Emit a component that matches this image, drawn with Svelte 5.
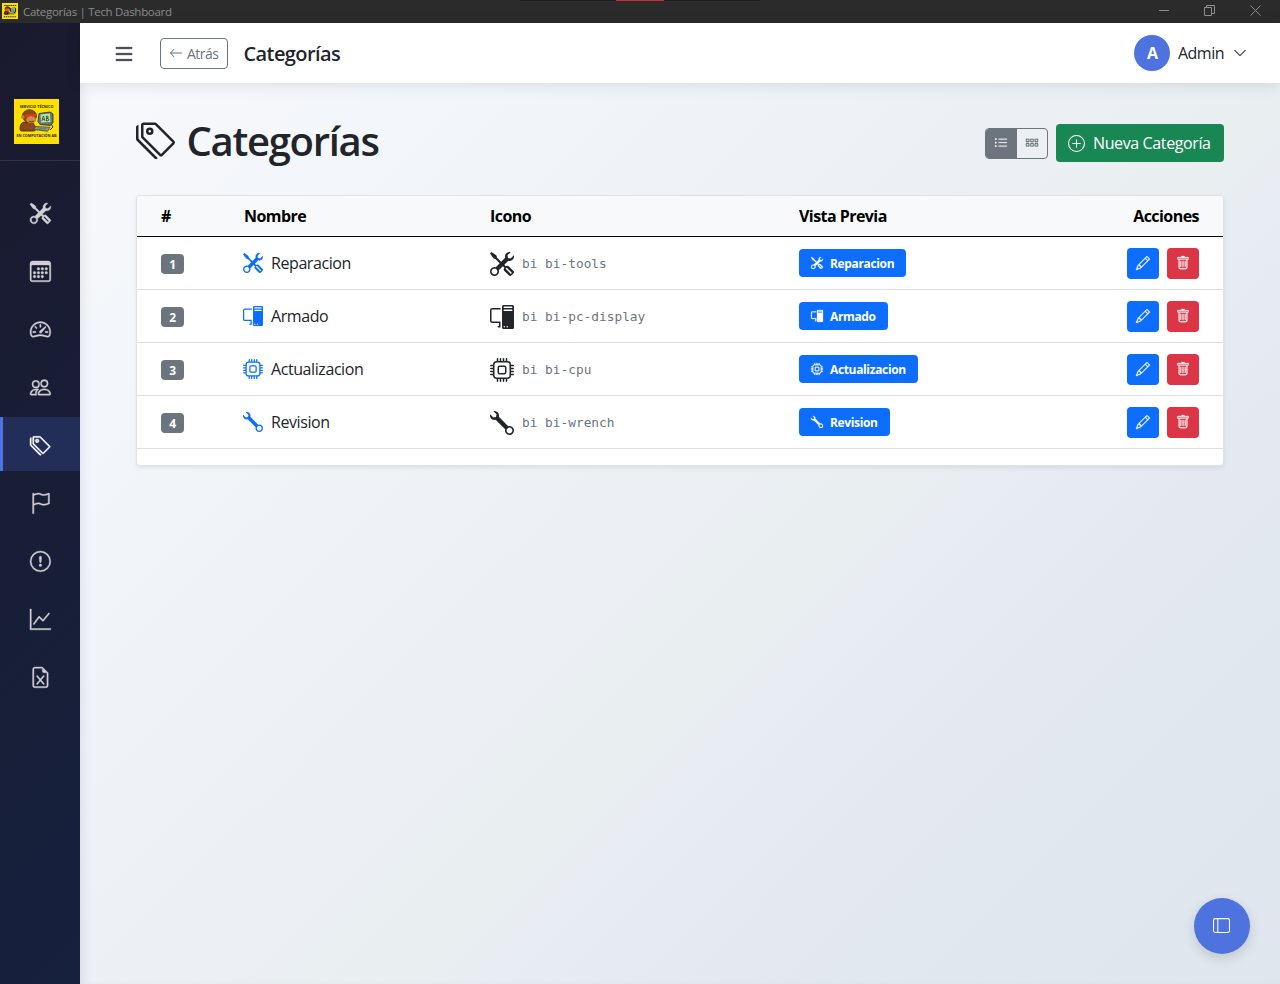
<script>
  const icons = {
    tools: ['M1 0 0 1l2.2 3.081a1 1 0 0 0 .815.419h.07a1 1 0 0 1 .708.293l2.675 2.675-2.617 2.654A3.003 3.003 0 0 0 0 13a3 3 0 1 0 5.878-.851l2.654-2.617.968.968-.305.914a1 1 0 0 0 .242 1.023l3.27 3.27a.997.997 0 0 0 1.414 0l1.586-1.586a.997.997 0 0 0 0-1.414l-3.27-3.27a1 1 0 0 0-1.023-.242L10.5 9.5l-.96-.96 2.68-2.643A3.005 3.005 0 0 0 16 3q0-.405-.102-.777l-2.14 2.141L12 4l-.364-1.757L13.777.102a3 3 0 0 0-3.675 3.68L7.462 6.46 4.793 3.793a1 1 0 0 1-.293-.707v-.071a1 1 0 0 0-.419-.814zm9.646 10.646a.5.5 0 0 1 .708 0l2.914 2.915a.5.5 0 0 1-.707.707l-2.915-2.914a.5.5 0 0 1 0-.708M3 11l.471.242.529.026.287.445.445.287.026.529L5 13l-.242.471-.026.529-.445.287-.287.445-.529.026L3 15l-.471-.242L2 14.732l-.287-.445L1.268 14l-.026-.529L1 13l.242-.471.026-.529.445-.287.287-.445.529-.026z'],
    tags: ['M3 2v4.586l7 7L14.586 9l-7-7zM2 2a1 1 0 0 1 1-1h4.586a1 1 0 0 1 .707.293l7 7a1 1 0 0 1 0 1.414l-4.586 4.586a1 1 0 0 1-1.414 0l-7-7A1 1 0 0 1 2 6.586z', 'M5.5 5a.5.5 0 1 1 0-1 .5.5 0 0 1 0 1m0 1a1.5 1.5 0 1 0 0-3 1.5 1.5 0 0 0 0 3M1 7.086a1 1 0 0 0 .293.707L8.75 15.25l-.043.043a1 1 0 0 1-1.414 0l-7-7A1 1 0 0 1 0 7.586V3a1 1 0 0 1 1-1z'],
    calendar: ['M14 0H2a2 2 0 0 0-2 2v12a2 2 0 0 0 2 2h12a2 2 0 0 0 2-2V2a2 2 0 0 0-2-2M1 3.857C1 3.384 1.448 3 2 3h12c.552 0 1 .384 1 .857v10.286c0 .473-.448.857-1 .857H2c-.552 0-1-.384-1-.857z', 'M6.5 7a1 1 0 1 0 0-2 1 1 0 0 0 0 2m3 0a1 1 0 1 0 0-2 1 1 0 0 0 0 2m3 0a1 1 0 1 0 0-2 1 1 0 0 0 0 2m-9 3a1 1 0 1 0 0-2 1 1 0 0 0 0 2m3 0a1 1 0 1 0 0-2 1 1 0 0 0 0 2m3 0a1 1 0 1 0 0-2 1 1 0 0 0 0 2m3 0a1 1 0 1 0 0-2 1 1 0 0 0 0 2m-9 3a1 1 0 1 0 0-2 1 1 0 0 0 0 2m3 0a1 1 0 1 0 0-2 1 1 0 0 0 0 2m3 0a1 1 0 1 0 0-2 1 1 0 0 0 0 2'],
    speedometer: ['M8 4a.5.5 0 0 1 .5.5V6a.5.5 0 0 1-1 0V4.5A.5.5 0 0 1 8 4M3.732 5.732a.5.5 0 0 1 .707 0l.915.914a.5.5 0 1 1-.708.708l-.914-.915a.5.5 0 0 1 0-.707M2 10a.5.5 0 0 1 .5-.5h1.586a.5.5 0 0 1 0 1H2.5A.5.5 0 0 1 2 10m9.5 0a.5.5 0 0 1 .5-.5h1.5a.5.5 0 0 1 0 1H12a.5.5 0 0 1-.5-.5m.754-4.246a.39.39 0 0 0-.527-.02L7.547 9.31a.91.91 0 1 0 1.302 1.258l3.434-4.297a.39.39 0 0 0-.029-.518z', 'M0 10a8 8 0 1 1 15.547 2.661c-.442 1.253-1.845 1.602-2.932 1.25C11.309 13.488 9.475 13 8 13c-1.474 0-3.31.488-4.615.911-1.087.352-2.49.003-2.932-1.25A8 8 0 0 1 0 10m8-7a7 7 0 0 0-6.603 9.329c.203.575.923.876 1.68.63C4.397 12.533 6.358 12 8 12s3.604.532 4.923.96c.757.245 1.477-.056 1.68-.631A7 7 0 0 0 8 3'],
    people: ['M15 14s1 0 1-1-1-4-5-4-5 3-5 4 1 1 1 1zm-7.978-1L7 12.996c.001-.264.167-1.03.76-1.72C8.312 10.629 9.282 10 11 10c1.717 0 2.687.63 3.24 1.276.593.69.758 1.457.76 1.72l-.008.002-.014.002zM11 7a2 2 0 1 0 0-4 2 2 0 0 0 0 4m3-2a3 3 0 1 1-6 0 3 3 0 0 1 6 0M6.936 9.28a6 6 0 0 0-1.23-.247A7 7 0 0 0 5 9c-4 0-5 3-5 4q0 1 1 1h4.216A2.24 2.24 0 0 1 5 13c0-1.01.377-2.042 1.09-2.904.243-.294.526-.569.846-.816M4.92 10A5.5 5.5 0 0 0 4 13H1c0-.26.164-1.03.76-1.724.545-.636 1.492-1.256 3.16-1.275zM1.5 5.5a3 3 0 1 1 6 0 3 3 0 0 1-6 0m3-2a2 2 0 1 0 0 4 2 2 0 0 0 0-4'],
    flag: ['M14.778.085A.5.5 0 0 1 15 .5V8a.5.5 0 0 1-.314.464L14.5 8l.186.464-.003.001-.006.003-.023.009a12 12 0 0 1-.397.15c-.264.095-.631.223-1.047.35-.816.252-1.879.523-2.71.523-.847 0-1.548-.28-2.158-.525l-.028-.01C7.68 8.71 7.14 8.5 6.5 8.5c-.7 0-1.638.23-2.437.477A20 20 0 0 0 3 9.342V15.5a.5.5 0 0 1-1 0V.5a.5.5 0 0 1 1 0v.282c.226-.079.496-.17.79-.26C4.606.272 5.67 0 6.5 0c.84 0 1.524.277 2.121.519l.043.018C9.286.788 9.828 1 10.5 1c.7 0 1.638-.23 2.437-.477a20 20 0 0 0 1.349-.476l.019-.007.004-.002h.001M14 1.221c-.22.078-.48.167-.766.255-.81.252-1.872.523-2.734.523-.886 0-1.592-.286-2.203-.534l-.008-.003C7.662 1.21 7.139 1 6.5 1c-.669 0-1.606.229-2.415.478A21 21 0 0 0 3 1.845v6.433c.22-.078.48-.167.766-.255C4.576 7.77 5.638 7.5 6.5 7.5c.847 0 1.548.28 2.158.525l.028.01C9.32 8.29 9.86 8.5 10.5 8.5c.668 0 1.606-.229 2.415-.478A21 21 0 0 0 14 7.655V1.222z'],
    alert: ['M8 15A7 7 0 1 1 8 1a7 7 0 0 1 0 14m0 1A8 8 0 1 0 8 0a8 8 0 0 0 0 16', 'M7.002 11a1 1 0 1 1 2 0 1 1 0 0 1-2 0M7.1 4.995a.905.905 0 1 1 1.8 0l-.35 3.507a.552.552 0 0 1-1.1 0z'],
    graph: ['M0 0h1v15h15v1H0zm14.817 3.113a.5.5 0 0 1 .07.704l-4.5 5.5a.5.5 0 0 1-.74.037L7.06 6.767l-3.656 5.027a.5.5 0 0 1-.808-.588l4-5.5a.5.5 0 0 1 .758-.06l2.609 2.61 4.15-5.073a.5.5 0 0 1 .704-.07'],
    excel: ['M5.884 6.68a.5.5 0 1 0-.768.64L7.349 10l-2.233 2.68a.5.5 0 0 0 .768.64L8 10.781l2.116 2.54a.5.5 0 0 0 .768-.641L8.651 10l2.233-2.68a.5.5 0 0 0-.768-.64L8 9.219l-2.116-2.54z', 'M14 14V4.5L9.5 0H4a2 2 0 0 0-2 2v12a2 2 0 0 0 2 2h8a2 2 0 0 0 2-2M9.5 3A1.5 1.5 0 0 0 11 4.5h2V14a1 1 0 0 1-1 1H4a1 1 0 0 1-1-1V2a1 1 0 0 1 1-1h5.5z'],
    list: ['M2.5 12a.5.5 0 0 1 .5-.5h10a.5.5 0 0 1 0 1H3a.5.5 0 0 1-.5-.5m0-4a.5.5 0 0 1 .5-.5h10a.5.5 0 0 1 0 1H3a.5.5 0 0 1-.5-.5m0-4a.5.5 0 0 1 .5-.5h10a.5.5 0 0 1 0 1H3a.5.5 0 0 1-.5-.5'],
    arrow: ['M15 8a.5.5 0 0 0-.5-.5H2.707l3.147-3.146a.5.5 0 1 0-.708-.708l-4 4a.5.5 0 0 0 0 .708l4 4a.5.5 0 0 0 .708-.708L2.707 8.5H14.5A.5.5 0 0 0 15 8'],
    chevron: ['M1.646 4.646a.5.5 0 0 1 .708 0L8 10.293l5.646-5.647a.5.5 0 0 1 .708.708l-6 6a.5.5 0 0 1-.708 0l-6-6a.5.5 0 0 1 0-.708'],
    bullets: ['M5 11.5a.5.5 0 0 1 .5-.5h9a.5.5 0 0 1 0 1h-9a.5.5 0 0 1-.5-.5m0-4a.5.5 0 0 1 .5-.5h9a.5.5 0 0 1 0 1h-9a.5.5 0 0 1-.5-.5m0-4a.5.5 0 0 1 .5-.5h9a.5.5 0 0 1 0 1h-9a.5.5 0 0 1-.5-.5m-3 1a1 1 0 1 0 0-2 1 1 0 0 0 0 2m0 4a1 1 0 1 0 0-2 1 1 0 0 0 0 2m0 4a1 1 0 1 0 0-2 1 1 0 0 0 0 2'],
    grid: ['M4 4v2H2V4zm1 7V9a1 1 0 0 0-1-1H2a1 1 0 0 0-1 1v2a1 1 0 0 0 1 1h2a1 1 0 0 0 1-1m0-5V4a1 1 0 0 0-1-1H2a1 1 0 0 0-1 1v2a1 1 0 0 0 1 1h2a1 1 0 0 0 1-1m5 5V9a1 1 0 0 0-1-1H7a1 1 0 0 0-1 1v2a1 1 0 0 0 1 1h2a1 1 0 0 0 1-1m0-5V4a1 1 0 0 0-1-1H7a1 1 0 0 0-1 1v2a1 1 0 0 0 1 1h2a1 1 0 0 0 1-1M9 4v2H7V4zm5 0h-2v2h2zM4 9v2H2V9zm5 0v2H7V9zm5 0v2h-2V9zm-3-5a1 1 0 0 1 1-1h2a1 1 0 0 1 1 1v2a1 1 0 0 1-1 1h-2a1 1 0 0 1-1-1zm1 4a1 1 0 0 0-1 1v2a1 1 0 0 0 1 1h2a1 1 0 0 0 1-1V9a1 1 0 0 0-1-1z'],
    plus: ['M8 15A7 7 0 1 1 8 1a7 7 0 0 1 0 14m0 1A8 8 0 1 0 8 0a8 8 0 0 0 0 16', 'M8 4a.5.5 0 0 1 .5.5v3h3a.5.5 0 0 1 0 1h-3v3a.5.5 0 0 1-1 0v-3h-3a.5.5 0 0 1 0-1h3v-3A.5.5 0 0 1 8 4'],
    pc: ['M8 1a1 1 0 0 1 1-1h6a1 1 0 0 1 1 1v14a1 1 0 0 1-1 1H9a1 1 0 0 1-1-1zm1 13.5a.5.5 0 1 0 1 0 .5.5 0 0 0-1 0m2 0a.5.5 0 1 0 1 0 .5.5 0 0 0-1 0M9.5 1a.5.5 0 0 0 0 1h5a.5.5 0 0 0 0-1zM9 3.5a.5.5 0 0 0 .5.5h5a.5.5 0 0 0 0-1h-5a.5.5 0 0 0-.5.5M1.5 2A1.5 1.5 0 0 0 0 3.5v7A1.5 1.5 0 0 0 1.5 12H6v2h-.5a.5.5 0 0 0 0 1H7v-4H1.5a.5.5 0 0 1-.5-.5v-7a.5.5 0 0 1 .5-.5H7V2z'],
    cpu: ['M5 0a.5.5 0 0 1 .5.5V2h1V.5a.5.5 0 0 1 1 0V2h1V.5a.5.5 0 0 1 1 0V2h1V.5a.5.5 0 0 1 1 0V2A2.5 2.5 0 0 1 14 4.5h1.5a.5.5 0 0 1 0 1H14v1h1.5a.5.5 0 0 1 0 1H14v1h1.5a.5.5 0 0 1 0 1H14v1h1.5a.5.5 0 0 1 0 1H14a2.5 2.5 0 0 1-2.5 2.5v1.5a.5.5 0 0 1-1 0V14h-1v1.5a.5.5 0 0 1-1 0V14h-1v1.5a.5.5 0 0 1-1 0V14h-1v1.5a.5.5 0 0 1-1 0V14A2.5 2.5 0 0 1 2 11.5H.5a.5.5 0 0 1 0-1H2v-1H.5a.5.5 0 0 1 0-1H2v-1H.5a.5.5 0 0 1 0-1H2v-1H.5a.5.5 0 0 1 0-1H2A2.5 2.5 0 0 1 4.5 2V.5A.5.5 0 0 1 5 0m-.5 3A1.5 1.5 0 0 0 3 4.5v7A1.5 1.5 0 0 0 4.5 13h7a1.5 1.5 0 0 0 1.5-1.5v-7A1.5 1.5 0 0 0 11.5 3zM5 6.5A1.5 1.5 0 0 1 6.5 5h3A1.5 1.5 0 0 1 11 6.5v3A1.5 1.5 0 0 1 9.5 11h-3A1.5 1.5 0 0 1 5 9.5zM6.5 6a.5.5 0 0 0-.5.5v3a.5.5 0 0 0 .5.5h3a.5.5 0 0 0 .5-.5v-3a.5.5 0 0 0-.5-.5z'],
    wrench: ['M.102 2.223A3.004 3.004 0 0 0 3.78 5.897l6.341 6.252A3.003 3.003 0 0 0 13 16a3 3 0 1 0-.851-5.878L5.897 3.781A3.004 3.004 0 0 0 2.223.1l2.141 2.142L4 4l-1.757.364zm13.37 9.019.528.026.287.445.445.287.026.529L15 13l-.242.471-.026.529-.445.287-.287.445-.529.026L13 15l-.471-.242-.529-.026-.287-.445-.445-.287-.026-.529L11 13l.242-.471.026-.529.445-.287.287-.445.529-.026L13 11z'],
    pencil: ['M12.146.146a.5.5 0 0 1 .708 0l3 3a.5.5 0 0 1 0 .708l-10 10a.5.5 0 0 1-.168.11l-5 2a.5.5 0 0 1-.65-.65l2-5a.5.5 0 0 1 .11-.168zM11.207 2.5 13.5 4.793 14.793 3.5 12.5 1.207zm1.586 3L10.5 3.207 4 9.707V10h.5a.5.5 0 0 1 .5.5v.5h.5a.5.5 0 0 1 .5.5v.5h.293zm-9.761 5.175-.106.106-1.528 3.821 3.821-1.528.106-.106A.5.5 0 0 1 5 12.5V12h-.5a.5.5 0 0 1-.5-.5V11h-.5a.5.5 0 0 1-.468-.325'],
    trash: ['M5.5 5.5A.5.5 0 0 1 6 6v6a.5.5 0 0 1-1 0V6a.5.5 0 0 1 .5-.5m2.5 0a.5.5 0 0 1 .5.5v6a.5.5 0 0 1-1 0V6a.5.5 0 0 1 .5-.5m3 .5a.5.5 0 0 0-1 0v6a.5.5 0 0 0 1 0z', 'M14.5 3a1 1 0 0 1-1 1H13v9a2 2 0 0 1-2 2H5a2 2 0 0 1-2-2V4h-.5a1 1 0 0 1-1-1V2a1 1 0 0 1 1-1H6a1 1 0 0 1 1-1h2a1 1 0 0 1 1 1h3.5a1 1 0 0 1 1 1zM4.118 4 4 4.059V13a1 1 0 0 0 1 1h6a1 1 0 0 0 1-1V4.059L11.882 4zM2.5 3h11V2h-11z'],
    sidebar: ['M0 3a2 2 0 0 1 2-2h12a2 2 0 0 1 2 2v10a2 2 0 0 1-2 2H2a2 2 0 0 1-2-2zm5-1v12h9a1 1 0 0 0 1-1V3a1 1 0 0 0-1-1zM4 2H2a1 1 0 0 0-1 1v10a1 1 0 0 0 1 1h2z']
  };

  const nav = ['tools', 'calendar', 'speedometer', 'people', 'tags', 'flag', 'alert', 'graph', 'excel'];
  const active = 'tags';

  const rows = [
    { name: 'Reparacion', icon: 'tools', code: 'bi bi-tools' },
    { name: 'Armado', icon: 'pc', code: 'bi bi-pc-display' },
    { name: 'Actualizacion', icon: 'cpu', code: 'bi bi-cpu' },
    { name: 'Revision', icon: 'wrench', code: 'bi bi-wrench' }
  ];
</script>

{#snippet icon(name, size)}
  <svg class="icon" width={size} height={size} viewBox="0 0 16 16" fill="currentColor">
    {#each icons[name] as d}<path {d} fill-rule="evenodd" />{/each}
  </svg>
{/snippet}

{#snippet mascot()}
  <rect width="45" height="45" fill="#ffe000" />
  <path d="M6 30q0-7 5-7l8 1 4 6-3 2H8q-2 0-2-2" fill="#8a4a18" stroke="#3a1c08" stroke-width=".8" />
  <ellipse cx="15.5" cy="17" rx="7" ry="6.3" fill="#8a4a18" stroke="#3a1c08" stroke-width=".7" />
  <circle cx="8.8" cy="18" r="1.8" fill="#c9823c" />
  <ellipse cx="17.2" cy="20.7" rx="5" ry="3.6" fill="#cf8a45" />
  <path d="M11 15.600l11-.6.4 1.600-3 1.200-2.500-1-3 1.200-2.500-.5z" fill="#e8381a" />
  <path d="M15 22.300q2.500 1.400 5-.3" fill="none" stroke="#3a1c08" stroke-width=".7" />
  <path d="M25 14.500l11-1.500 3 2v9l-3 2.500-10-1-2-3z" fill="#66786d" stroke="#26302b" stroke-width=".8" />
  <path d="M26.500 15.500l9.500-1 .5 8.500-9.500.5z" fill="#b5dfa5" />
  <path d="M27.800 22l1.600-5 1.600 5m-2.600-1.700h2M32.500 17v5q3 0 2.200-2-.3-.8-2.200-.6 2-.1 1.700-1.500-.3-1-1.700-.9" fill="none" stroke="#22452b" stroke-width=".8" />
  <path d="M22 27.500l14 .8-2.500 4-14-1.800z" fill="#93a294" stroke="#333d37" stroke-width=".7" />
  <path d="M23 29l10 .8M22 30.300l10 1" stroke="#46534b" stroke-width=".5" />
  <path d="M37 25l2 3-3 3" fill="none" stroke="#3a1c08" />
{/snippet}

<div class="window">
  <div class="titlebar">
    <div class="strip"><i></i></div>
    <svg class="logo favicon" width="16" height="16" viewBox="0 0 45 45">
      {@render mascot()}
      <path d="M6 7h34M5 38.500h36" stroke="#2c2600" stroke-width="3" stroke-dasharray="4 2" />
      <path d="M7 31l2-8 8 3-2 6zM9 16l3-5 8 1 2 5M24 15v9M38 15v9l-4 4" fill="none" stroke="#241403" stroke-width="2.5" />
    </svg>
    <span class="wtitle">Categorías | Tech Dashboard</span>
    <div class="controls">
      <svg width="10" height="11" viewBox="0 0 10 11"><path d="M0 5.500h10" /></svg>
      <svg width="11" height="11" viewBox="0 0 11 11"><path d="M.5 2.500h7v8h-7zM2.500 2V.5h8v8H8" /></svg>
      <svg width="11" height="11" viewBox="0 0 11 11"><path d="M.5.5l10 10M10.500.5l-10 10" /></svg>
    </div>
  </div>

  <div class="app">
    <aside>
      <div class="brand">
        <svg class="logo" width="45" height="45" viewBox="0 0 45 45">
          {@render mascot()}
          <text x="22.5" y="8.8" text-anchor="middle">SERVICIO TÉCNICO</text>
          <text x="22.5" y="38" text-anchor="middle">EN COMPUTACIÓN AB</text>
        </svg>
      </div>
      <nav>
        {#each nav as item}
          <div class="item" class:active={item === active}>{@render icon(item, 21)}</div>
        {/each}
      </nav>
    </aside>

    <div class="content">
      <header>
        <span class="burger">{@render icon('list', 24)}</span>
        <button class="back">{@render icon('arrow', 14)}<span>Atrás</span></button>
        <span class="htitle">Categorías</span>
        <div class="user">
          <span class="avatar">A</span>
          <span class="uname">Admin</span>
          {@render icon('chevron', 14)}
        </div>
      </header>

      <main>
        <div class="head">
          <h1>{@render icon('tags', 40)}<span>Categorías</span></h1>
          <div class="tools">
            <div class="toggle">
              <button class="on">{@render icon('bullets', 14)}</button>
              <button>{@render icon('grid', 14)}</button>
            </div>
            <button class="new">{@render icon('plus', 17)}<span>Nueva Categoría</span></button>
          </div>
        </div>

        <section class="card">
          <table>
            <colgroup><col class="c1" /><col class="c2" /><col class="c3" /><col class="c4" /><col /></colgroup>
            <thead>
              <tr><th>#</th><th>Nombre</th><th>Icono</th><th>Vista Previa</th><th class="end">Acciones</th></tr>
            </thead>
            <tbody>
              {#each rows as row, i}
                <tr>
                  <td><span class="num">{i + 1}</span></td>
                  <td><div class="cell name">{@render icon(row.icon, 20)}<span>{row.name}</span></div></td>
                  <td><div class="cell code">{@render icon(row.icon, 24)}<code>{row.code}</code></div></td>
                  <td><div class="badge">{@render icon(row.icon, 12)}<span>{row.name}</span></div></td>
                  <td>
                    <div class="actions">
                      <button class="edit">{@render icon('pencil', 14)}</button>
                      <button class="del">{@render icon('trash', 14)}</button>
                    </div>
                  </td>
                </tr>
              {/each}
            </tbody>
          </table>
        </section>
      </main>
      <button class="fab">{@render icon('sidebar', 17)}</button>
    </div>
  </div>
</div>

<style>
  :global(body) { margin: 0; }
  * { box-sizing: border-box; }
  .window { height: 984px; display: flex; flex-direction: column; overflow: hidden; font-family: "Open Sans", "Noto Sans", sans-serif; font-size: 16px; line-height: 24px; color: #212529; letter-spacing: -0.4px; }
  button { font: inherit; letter-spacing: inherit; margin: 0; }
  .icon, .logo { display: block; flex: none; }
  .logo text { font: 700 3.7px/1 "Open Sans", sans-serif; fill: #2c2600; letter-spacing: 0; }

  .titlebar { position: relative; height: 23px; flex: none; background: #2b2b2b; display: flex; align-items: center; padding: 0 19.5px 0 2px; }
  .favicon { margin-top: -1px; }
  .strip { position: absolute; left: 520px; top: 0; width: 240px; height: 1px; background: #1c1c1c; }
  .strip i { display: block; width: 48px; height: 1px; margin: 0 auto; background: #cf2b3d; }
  .wtitle { margin-left: 5px; font-size: 11.5px; color: #8b8b8b; letter-spacing: -0.3px; }
  .controls { margin-left: auto; display: flex; gap: 35px; margin-top: -3px; }
  .controls svg { fill: none; stroke: #8f8f8f; stroke-width: 1; }

  .app { flex: 1; display: flex; min-height: 0; }
  aside { width: 80px; flex: none; background: linear-gradient(135deg, #1a1a2e 0%, #16213e 100%); }
  .brand { height: 138px; padding: 76px 0 0 14px; border-bottom: 1px solid #31314a; }
  nav { padding-top: 24px; display: flex; flex-direction: column; gap: 4px; }
  .item { height: 54px; display: flex; align-items: center; justify-content: center; color: #d1d1d5; padding-top: 2px; }
  .item :global(svg) { width: 20.8px; height: 20.8px; stroke: currentColor; stroke-width: 0.3; overflow: visible; }
  .active { background: #222e58; box-shadow: inset 3px 0 #4e73df; color: #fff; }

  .content { position: relative; flex: 1; display: flex; flex-direction: column; background: linear-gradient(135deg, #f8f9fc 0%, #f3f6fa 18%, #edf1f5 42%, #e9eef1 60%, #e7ebf4 65%, #e1e7ee 84%, #dfe6ed 100%); box-shadow: inset 8px 0 12px -6px rgba(0, 0, 0, 0.09); }
  header { height: 60px; flex: none; background: #fff; display: flex; align-items: center; padding: 0 33px 0 32px; box-shadow: 0 2px 15px rgba(0, 0, 0, 0.1); }
  .burger { color: #2b2b40; padding-top: 2px; }
  .burger :global(svg) { stroke: currentColor; stroke-width: 0.3; }
  .back { height: 31px; width: 68px; margin-left: 24px; padding: 0 0 0 8px; display: flex; align-items: center; gap: 4px; border: 1px solid #6c757d; border-radius: 4px; background: #fff; color: #6c757d; font-size: 14px; }
  .back span { padding-top: 1px; letter-spacing: -0.5px; }
  .htitle { margin-left: 15.5px; padding-top: 2px; font-size: 20px; font-weight: 600; letter-spacing: -0.6px; }
  .user { margin-left: auto; display: flex; align-items: center; color: #212529; }
  .avatar { width: 36px; height: 36px; border-radius: 50%; background: #4e73df; color: #fff; font-weight: 700; text-align: center; line-height: 37px; }
  .uname { margin: 0 9px 0 7.5px; letter-spacing: -0.5px; }

  main { padding: 32px 56px; }
  .head { height: 56px; display: flex; align-items: center; justify-content: space-between; }
  h1 { margin: -4px 0 0; display: flex; align-items: center; gap: 10.5px; font-size: 40px; font-weight: 600; line-height: 48px; letter-spacing: -1.3px; }
  h1 :global(svg) { margin-top: -2px; }
  .tools { display: flex; align-items: center; gap: 8px; }
  .toggle { display: flex; border: 1px solid #6c757d; border-radius: 4px; height: 31px; width: 63px; overflow: hidden; }
  .toggle button { flex: 1; border: 0; padding: 0; display: grid; place-items: center; background: transparent; color: #6c757d; }
  .toggle .on { background: #6c757d; color: #fff; }
  .toggle :global(svg) { stroke: currentColor; stroke-width: 0.25; }
  .new { width: 168px; height: 38px; border: 0; border-radius: 4px; background: #198754; color: #fff; padding: 0 0 0 12px; display: flex; align-items: center; gap: 8px; }
  .new span { letter-spacing: -0.38px; }

  .card { margin-top: 24px; height: 271px; background: #fff; border: 1px solid #dfe2e6; border-radius: 4px; box-shadow: 0 2px 4px rgba(0, 0, 0, 0.075); overflow: hidden; }
  table { width: 100%; table-layout: fixed; border-collapse: separate; border-spacing: 0; }
  .c1 { width: 99px; } .c2 { width: 246px; } .c3 { width: 309px; } .c4 { width: 240px; }
  th { height: 41px; padding: 0 8px; text-align: left; font-weight: 700; color: #000; background: #f8f9fa; border-bottom: 1px solid #000; letter-spacing: -0.55px; }
  td { height: 53px; padding: 0 8px; border-bottom: 1px solid #dee2e6; }
  th:first-child, td:first-child { padding-left: 24px; }
  th:last-child, td:last-child { padding-right: 24px; }
  .end { text-align: right; }
  .num { display: block; width: 23px; height: 20px; margin-top: 2px; border-radius: 4px; background: #6c757d; color: #fff; font-size: 12px; font-weight: 700; line-height: 21px; text-align: center; }
  .cell { display: flex; align-items: center; gap: 8px; }
  .code { padding-top: 1px; }
  .name { color: #212529; letter-spacing: -0.42px; }
  .name :global(svg) { color: #0d6efd; margin-left: -1px; }
  code { font-family: "DejaVu Sans Mono", monospace; font-size: 12.8px; letter-spacing: 0; color: #6c757d; }
  .badge { display: inline-flex; vertical-align: middle; height: 28px; padding: 0 12px; align-items: center; gap: 7px; border-radius: 4px; background: #0d6efd; color: #fff; font-size: 12px; font-weight: 700; letter-spacing: -0.35px; }
  .badge span { padding-top: 2px; }
  .actions { display: flex; justify-content: flex-end; gap: 8px; }
  .actions button { width: 32px; height: 31px; border: 0; border-radius: 4px; padding: 0; display: grid; place-items: center; color: #fff; }
  .actions :global(svg), .badge :global(svg) { stroke: currentColor; stroke-width: 0.3; overflow: visible; }
  .edit { background: #0d6efd; }
  .actions .del { background: #dc3545; }
  .fab { position: absolute; right: 30px; bottom: 30px; width: 56px; height: 56px; padding: 0 1px 1px 0; border: 0; border-radius: 50%; background: #4e73df; color: #fff; display: grid; place-items: center; box-shadow: 0 4px 12px rgba(0, 0, 0, 0.15); }
</style>
